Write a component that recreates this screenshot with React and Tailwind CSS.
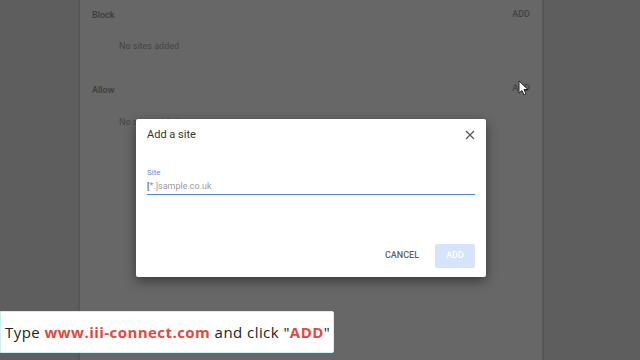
export default function App() {
    return (
        <div className="relative w-[640px] h-[360px] overflow-hidden bg-[#5e5e5e] font-['Roboto',sans-serif]">
            {/* dimmed settings page */}
            <div className="ml-[78px] w-[466px] h-full bg-[#676767] border-x-2 border-[#575757]">
                <div className="flex justify-between pl-[12px] pr-[12px] pt-[8px]">
                    <span className="text-[9px] font-medium text-[#3c3c3c] mt-[1px]">Block</span>
                    <span className="text-[9px] font-medium text-[#444]">ADD</span>
                </div>
                <div className="pl-[39px] pt-[17px] text-[9px] text-[#454545]">No sites added</div>
                <div className="flex justify-between pl-[12px] pr-[12px] pt-[29px]">
                    <span className="text-[9px] font-medium text-[#3c3c3c] mt-[2px]">Allow</span>
                    <span className="text-[9px] font-medium text-[#444]">ADD</span>
                </div>
                <div className="pl-[39px] pt-[18px] text-[9px] text-[#454545]">No sites added</div>
            </div>

            {/* cursor */}
            <svg className="absolute left-[518px] top-[80px]" width="11" height="16" viewBox="0 0 11 16">
                <path d="M1 1 L1 13 L4 10.5 L6 15 L8 14 L6 9.5 L10 9.5 Z" fill="#fff" stroke="#222" strokeWidth="1" strokeLinejoin="round" />
            </svg>

            {/* dialog */}
            <div className="absolute left-[136px] top-[119px] w-[350px] h-[158px] bg-white rounded-[2px] shadow-[0_4px_12px_rgba(0,0,0,0.45)] px-[11px]">
                <div className="flex items-center justify-between pt-[8px]">
                    <span className="text-[11px] text-[#333]">Add a site</span>
                    <svg width="10" height="10" viewBox="0 0 10 10">
                        <path d="M1 1 L9 9 M9 1 L1 9" stroke="#555" strokeWidth="1.2" />
                    </svg>
                </div>
                <div className="pt-[23px] text-[8px] text-[#5a8fe0]">Site</div>
                <div className="flex items-center border-b-[1.5px] border-[#4a86e0] pt-[1px] pb-[2px]">
                    <span className="text-[9px] text-[#333] leading-[12px]">[</span>
                    <span className="text-[9px] text-[#9a9a9a] leading-[12px]">*.]sample.co.uk</span>
                </div>
                <div className="flex justify-end items-center gap-[16px] pt-[49px]">
                    <span className="text-[9px] font-medium text-[#5f6368]">CANCEL</span>
                    <div className="w-[40px] h-[24px] bg-[#d5e3fb] rounded-[2px] flex items-center justify-center text-[9px] font-medium text-white">ADD</div>
                </div>
            </div>

            {/* caption */}
            <div className="absolute left-0 top-[311px] w-[334px] h-[42px] bg-white border border-[#cfeff0] rounded-r-[2px] flex items-center pl-[4px] text-[15px] font-['Open_Sans',sans-serif] text-[#222] whitespace-nowrap tracking-[0.45px]">
                <span>Type&nbsp;</span>
                <span className="font-bold text-[#e04a3c]">www.iii-connect.com</span>
                <span>&nbsp;and click "</span>
                <span className="font-bold text-[#e04a3c]">ADD</span>
                <span>"</span>
            </div>
        </div>
    );
}
